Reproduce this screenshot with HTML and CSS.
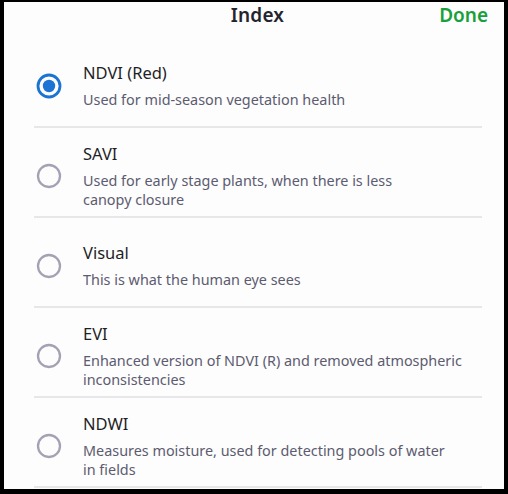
FILE: index.html
```html
<!DOCTYPE html>
<html>
<head>
<meta charset="utf-8">
<link rel="stylesheet" href="styles.css">
</head>
<body>
<div class="sheet">
  <header class="head">
    <span></span>
    <h1 class="title">Index</h1>
    <button class="done">Done</button>
  </header>
  <ul class="list">
    <li class="row">
      <svg class="radio" viewBox="0 0 26 26" width="26" height="26"><circle cx="13" cy="13" r="11" fill="none" stroke="#1b73d3" stroke-width="2.8"/><circle cx="13" cy="13" r="6.2" fill="#1b73d3"/></svg>
      <div class="text"><div class="name">NDVI (Red)</div><div class="desc">Used for mid-season vegetation health</div></div>
    </li>
    <li class="row">
      <svg class="radio" viewBox="0 0 26 26" width="26" height="26"><circle cx="13" cy="13" r="11" fill="none" stroke="#a3a2b4" stroke-width="2.3"/></svg>
      <div class="text"><div class="name">SAVI</div><div class="desc">Used for early stage plants, when there is less<br>canopy closure</div></div>
    </li>
    <li class="row">
      <svg class="radio" viewBox="0 0 26 26" width="26" height="26"><circle cx="13" cy="13" r="11" fill="none" stroke="#a3a2b4" stroke-width="2.3"/></svg>
      <div class="text"><div class="name">Visual</div><div class="desc">This is what the human eye sees</div></div>
    </li>
    <li class="row">
      <svg class="radio" viewBox="0 0 26 26" width="26" height="26"><circle cx="13" cy="13" r="11" fill="none" stroke="#a3a2b4" stroke-width="2.3"/></svg>
      <div class="text"><div class="name">EVI</div><div class="desc">Enhanced version of NDVI (R) and removed atmospheric inconsistencies</div></div>
    </li>
    <li class="row">
      <svg class="radio" viewBox="0 0 26 26" width="26" height="26"><circle cx="13" cy="13" r="11" fill="none" stroke="#a3a2b4" stroke-width="2.3"/></svg>
      <div class="text"><div class="name">NDWI</div><div class="desc">Measures moisture, used for detecting pools of water<br>in fields</div></div>
    </li>
  </ul>
</div>
</body>
</html>
```
FILE: styles.css
```css
html, body {
  margin: 0;
  padding: 0;
  background: #000;
}
body {
  width: 508px;
  height: 494px;
  overflow: hidden;
  font-family: "Noto Sans", "Open Sans", sans-serif;
}
.sheet {
  margin: 2px 4px 0 4px;
  width: 500px;
  height: 487px;
  background: #fdfdfd;
  overflow: hidden;
}
.head {
  height: 36px;
  display: grid;
  grid-template-columns: 1fr auto 1fr;
  align-items: start;
}
.title {
  margin: 0;
  padding-left: 7px;
  font-size: 19px;
  line-height: 26px;
  font-weight: 600;
  color: #24242f;
  letter-spacing: 0.2px;
}
.done {
  justify-self: end;
  margin: 0 16px 0 0;
  padding: 0;
  border: 0;
  background: none;
  font-family: "Noto Sans", "Open Sans", sans-serif;
  font-size: 19px;
  line-height: 27px;
  font-weight: 600;
  color: #18a03b;
}
.list {
  list-style: none;
  margin: 0;
  padding: 0;
}
.row {
  box-sizing: border-box;
  height: 90px;
  margin: 0 22px 0 30px;
  padding-top: 7px;
  border-bottom: 2px solid #e7e7ea;
  display: flex;
  align-items: center;
}
.radio {
  flex: none;
  margin-left: 2px;
}
.text {
  margin-left: 21px;
  width: 385px;
}
.name {
  font-size: 16.5px;
  line-height: 22px;
  color: #1f1f28;
}
.desc {
  margin-top: 6px;
  font-size: 14.4px;
  line-height: 19px;
  color: #5c5b70;
}
```
